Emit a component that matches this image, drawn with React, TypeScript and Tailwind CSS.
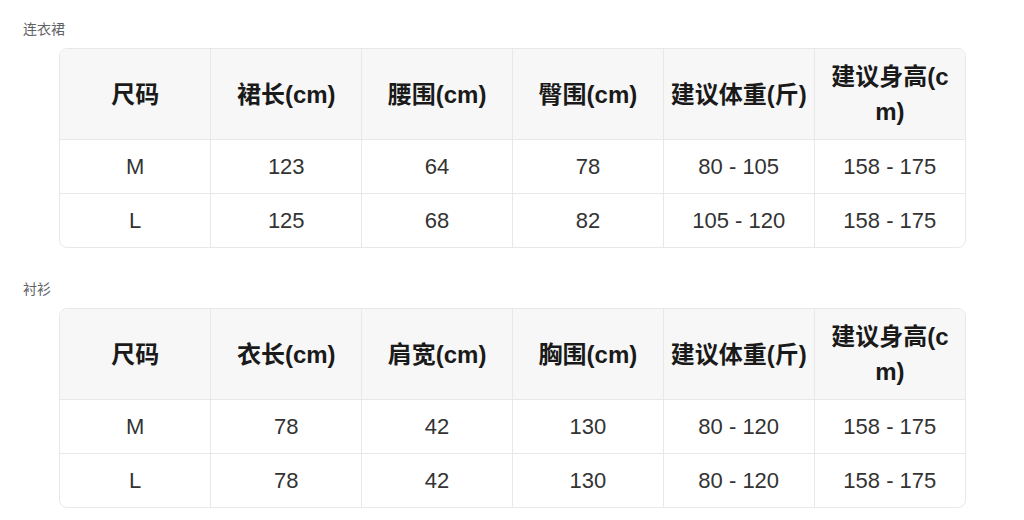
import React from "react";

type SizeTable = {
  title: string;
  headers: string[];
  rows: string[][];
};

const tables: SizeTable[] = [
  {
    title: "连衣裙",
    headers: ["尺码", "裙长(cm)", "腰围(cm)", "臀围(cm)", "建议体重(斤)", "建议身高(cm)"],
    rows: [
      ["M", "123", "64", "78", "80 - 105", "158 - 175"],
      ["L", "125", "68", "82", "105 - 120", "158 - 175"],
    ],
  },
  {
    title: "衬衫",
    headers: ["尺码", "衣长(cm)", "肩宽(cm)", "胸围(cm)", "建议体重(斤)", "建议身高(cm)"],
    rows: [
      ["M", "78", "42", "130", "80 - 120", "158 - 175"],
      ["L", "78", "42", "130", "80 - 120", "158 - 175"],
    ],
  },
];

const font = {
  fontFamily: '"Liberation Sans", "Noto Sans CJK SC", sans-serif',
};

const SizeChart: React.FC<{ table: SizeTable }> = ({ table }) => {
  return (
    <section>
      <div className="text-[14px] leading-5 text-[#606266] mb-[9px]">
        {table.title}
      </div>
      <div className="ml-[36px] w-[907px] border border-[#e8e8e8] rounded-lg overflow-hidden">
        <table className="w-full table-fixed border-collapse">
          <thead>
            <tr className="bg-[#f7f7f7]">
              {table.headers.map((h, i) => (
                <th
                  key={h}
                  className={`px-[5px] py-[10px] text-[24px] leading-[35px] font-bold text-[#1a1a1a] text-center align-middle break-all ${
                    i > 0 ? "border-l border-[#e8e8e8]" : ""
                  }`}
                >
                  {h}
                </th>
              ))}
            </tr>
          </thead>
          <tbody>
            {table.rows.map((row, r) => (
              <tr key={r} className="border-t border-[#e8e8e8]">
                {row.map((cell, i) => (
                  <td
                    key={i}
                    className={`px-[5px] py-[10px] text-[22px] leading-[33px] text-[#333333] text-center ${
                      i > 0 ? "border-l border-[#e8e8e8]" : ""
                    }`}
                  >
                    {cell}
                  </td>
                ))}
              </tr>
            ))}
          </tbody>
        </table>
      </div>
    </section>
  );
};

export default function App() {
  return (
    <div className="w-[1024px] h-[520px] bg-white pl-[23px] pt-[19px] flex flex-col gap-[31px]" style={font}>
      {tables.map((t) => (
        <SizeChart key={t.title} table={t} />
      ))}
    </div>
  );
}
